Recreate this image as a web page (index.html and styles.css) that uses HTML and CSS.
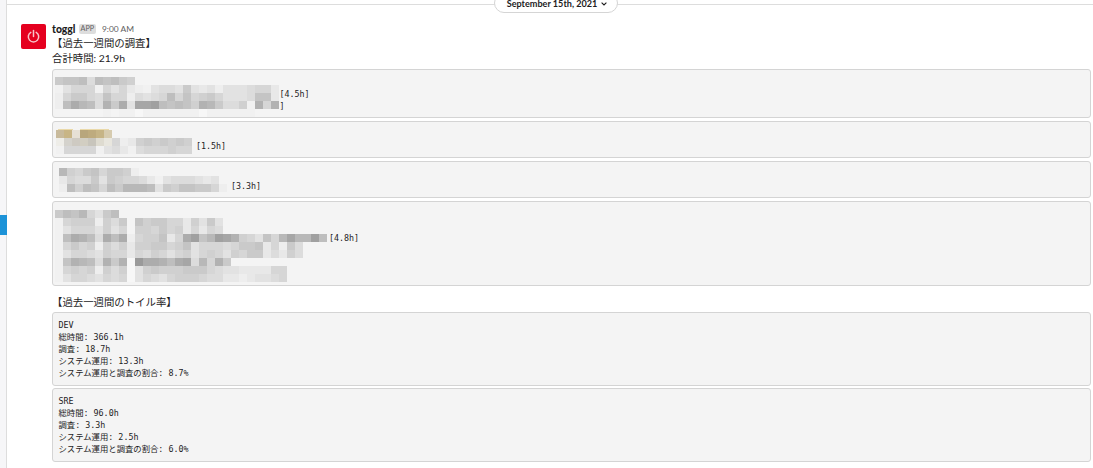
FILE: index.html
```html
<!DOCTYPE html>
<html lang="ja">
<head>
    <meta charset="UTF-8">
    <meta name="viewport" content="width=device-width, initial-scale=1.0">
    <title>toggl</title>
    <link rel="stylesheet" href="styles.css">
</head>
<body>

<div class="app">
    <div class="sidebar">
        <div class="selected"></div>
    </div>

    <div class="channel">
        <div class="date-divider">
            <button class="date-button">September 15th, 2021
                <svg width="6" height="4" viewBox="0 0 6 4"><path d="M0.6 0.7 L3 3 L5.4 0.7" fill="none" stroke="#1d1c1d" stroke-width="1.1"/></svg>
            </button>
        </div>

        <div class="message">
            <div class="avatar">
                <svg width="25" height="25" viewBox="0 0 25 25" fill="none" stroke="#f8c4c9" stroke-width="1.5" stroke-linecap="round">
                    <path d="M9.8 8.3 A5.2 5.2 0 1 0 15.2 8.3"/>
                    <path d="M12.5 6.6 V12.4"/>
                </svg>
            </div>
            <div class="content">
                <div class="sender">
                    <span class="name">toggl</span>
                    <span class="badge">APP</span>
                    <span class="time">9:00 AM</span>
                </div>
                <div class="text">【過去一週間の調査】</div>
                <div class="text">合計時間: 21.9h</div>

                <!-- 調査の一覧 -->
                <div class="blocks">
                    <div class="code">
                        <div class="line"></div>
                        <div class="line hours-45">[4.5h]</div>
                        <div class="line hours-45">]</div>
                        <div class="mosaic mosaic-1" data-name="first"></div>
                    </div>
                    <div class="code">
                        <div class="line"></div>
                        <div class="line hours-15">[1.5h]</div>
                        <div class="mosaic mosaic-2" data-name="second"></div>
                    </div>
                    <div class="code">
                        <div class="line"></div>
                        <div class="line hours-33">[3.3h]</div>
                        <div class="mosaic mosaic-3" data-name="third"></div>
                    </div>
                    <div class="code">
                        <div class="line"></div>
                        <div class="line"></div>
                        <div class="line hours-48">[4.8h]</div>
                        <div class="line"></div>
                        <div class="line"></div>
                        <div class="line"></div>
                        <div class="mosaic mosaic-4" data-name="fourth"></div>
                    </div>
                </div>

                <div class="text toil">【過去一週間のトイル率】</div>

                <!-- トイル率 -->
                <div class="blocks summary">
                    <div class="code">
                        <div class="line">DEV</div>
                        <div class="line">総時間: 366.1h</div>
                        <div class="line">調査: 18.7h</div>
                        <div class="line">システム運用: 13.3h</div>
                        <div class="line">システム運用と調査の割合: 8.7%</div>
                    </div>
                    <div class="code">
                        <div class="line">SRE</div>
                        <div class="line">総時間: 96.0h</div>
                        <div class="line">調査: 3.3h</div>
                        <div class="line">システム運用: 2.5h</div>
                        <div class="line">システム運用と調査の割合: 6.0%</div>
                    </div>
                </div>
            </div>
        </div>
    </div>
</div>

<script src="script.js"></script>
</body>
</html>
```

FILE: styles.css
```css
body {
    margin: 0;
    font-family: Lato, "Noto Sans CJK JP", sans-serif;
    font-size: 10.4px;
    color: #1d1c1d;
    background-color: white;
    overflow: hidden;
}
.app {
    display: flex;
    height: 468px;
}
.sidebar {
    box-sizing: border-box;
    width: 7px;
    padding-top: 215px;
    background-color: #f6f6f8;
    border-right: 1px solid #dddddd;
}
.selected {
    width: 7px;
    height: 20px;
    background-color: #1d93d8;
}
.channel {
    flex: 1;
    min-width: 0;
}
.date-divider {
    display: flex;
    justify-content: center;
    height: 24px;
    background: linear-gradient(#dddddd, #dddddd) 0 4px / 100% 1px no-repeat;
}
.date-button {
    box-sizing: border-box;
    display: flex;
    align-items: center;
    gap: 4px;
    height: 20px;
    margin: -7px 0 0 12px;
    padding: 1px 10px 0 12px;
    border: 1px solid #d5d5d5;
    border-radius: 10px;
    background-color: white;
    color: #1d1c1d;
    font-family: Lato, sans-serif;
    font-size: 9.1px;
    font-weight: bold;
    white-space: nowrap;
}
.message {
    display: flex;
    gap: 6px;
    padding: 0 2px 0 14px;
}
.avatar {
    width: 25px;
    height: 25px;
    border-radius: 2px;
    background-color: #e5001f;
}
.avatar svg {
    display: block;
}
.content {
    flex: 1;
    min-width: 0;
}
.sender {
    display: flex;
    align-items: center;
    height: 10px;
    margin-bottom: 2px;
}
.name {
    font-weight: 900;
}
.badge {
    height: 10px;
    margin-left: 3px;
    padding: 0 2px;
    border-radius: 2px;
    background-color: #dddddd;
    color: #616061;
    font-size: 7.2px;
    line-height: 10px;
}
.time {
    margin-left: 6px;
    color: #616061;
    font-size: 8.4px;
}
.text {
    height: 15px;
    line-height: 15px;
    white-space: nowrap;
}
.blocks {
    display: flex;
    flex-direction: column;
    gap: 3px;
    margin-top: 3px;
}
.code {
    position: relative;
    padding: 6px 6px 5px 5.5px;
    border: 1px solid #d4d4d4;
    border-radius: 3px;
    background-color: #f4f4f4;
    font-family: "DejaVu Sans Mono", "Noto Sans CJK JP", monospace;
    font-size: 8.35px;
}
.line {
    height: 12px;
    line-height: 12px;
    white-space: pre;
}
.toil {
    margin-top: 9px;
}
.summary {
    gap: 2px;
    margin-top: 2px;
}
.summary .code {
    padding-bottom: 6px;
}
.hours-45 {
    padding-left: 221px;
}
.hours-15 {
    padding-left: 137.5px;
}
.hours-33 {
    padding-left: 172.5px;
}
.hours-48 {
    padding-left: 270.5px;
}

/* モザイク */
.mosaic {
    position: absolute;
}
.mosaic-row {
    display: flex;
    height: 8px;
}
.cell {
    width: 8px;
    height: 8px;
}
.mosaic-1 {
    left: 2px;
    top: 7px;
}
.mosaic-2 {
    left: 3px;
    top: 8px;
}
.mosaic-2::before {
    content: "";
    position: absolute;
    left: 2px;
    top: -1px;
    width: 51px;
    height: 1px;
    background: linear-gradient(to right, #ead9a9 15px, transparent 15px, transparent 22px, #ead9a9 22px);
}
.mosaic-3 {
    left: 6px;
    top: 6px;
}
.mosaic-4 {
    left: 2px;
    top: 8px;
}
```

FILE: script.js
```js
// 1文字 = 8pxのマス。0〜fは濃さ、大文字は色付き
const mosaics = {
    first: [
        '7889498976',
        '0355505352103443732313334552',
        '1577548551434595856753334882',
        '19ca94b7c3dde98986ba74460b5b',
        '......0.00-0000000-000000'
    ],
    second: [
        'ABCDEFG',
        'HIJKLMN5126767676',
        '05555034204555655'
    ],
    third: [
        'a657857761',
        '25447376554203444323',
        '19698597aaa9376887751'
    ],
    fourth: [
        '798a5379',
        '056661647.86775526373',
        '035553635.66575625254',
        '09cb94c9c1566825ce8aedb65385adaae9',
        '0575616462667756835554577825174',
        '0355436552546535635653657724264',
        '08ba94b7b-fccb9cd4a5b7',
        '056561646-3676667775433222255',
        '035543545-3543566654422123345'
    ]
};

const colors = {
    '-': '#f7f7f7',
    '0': '#f1f1f1',
    A: '#c8ba9c', B: '#c8b586', C: '#e6e0d5', D: '#b8a67c', E: '#beab7e', F: '#c6b486', G: '#d6cbaf',
    H: '#eeede8', I: '#d4d2cc', J: '#cecac2', K: '#d2cec2', L: '#c8c5bc', M: '#dedbd0', N: '#e8e6de'
};

function cellColor(c) {
    if (c === '.') return 'transparent';
    if (colors[c]) return colors[c];
    const gray = 244 - parseInt(c, 16) * 6;
    return `rgb(${gray}, ${gray}, ${gray})`;
}

document.querySelectorAll('.mosaic').forEach(mosaic => {
    mosaics[mosaic.dataset.name].forEach(row => {
        const rowDiv = document.createElement('div');
        rowDiv.classList.add('mosaic-row');
        for (const c of row) {
            const cell = document.createElement('div');
            cell.classList.add('cell');
            cell.style.backgroundColor = cellColor(c);
            rowDiv.appendChild(cell);
        }
        mosaic.appendChild(rowDiv);
    });
});
```
